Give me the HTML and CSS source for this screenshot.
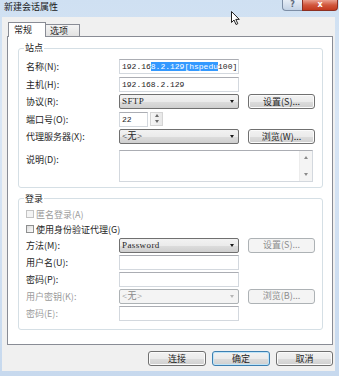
FILE: index.html
```html
<!DOCTYPE html>
<html lang="zh-CN">
<head>
    <meta charset="UTF-8">
    <title>新建会话属性</title>
    <link rel="stylesheet" href="styles.css">
</head>
<body>
    <div class="window">
        <div class="titlebar">
            <span class="title">新建会话属性</span>
            <div class="caption-buttons">
                <span class="cap cap-help">?</span>
                <span class="cap cap-close">x</span>
            </div>
        </div>

        <div class="body">
            <div class="tabs">
                <span class="tab active">常规</span>
                <span class="tab">选项</span>
            </div>

            <div class="panel">
                <fieldset class="group site">
                    <legend>站点</legend>

                    <span class="label">名称(N):</span>
                    <div class="text">192.16<span class="sel">8.2.129[hspedu</span>100]</div>
                    <span></span>

                    <span class="label">主机(H):</span>
                    <div class="text">192.168.2.129</div>
                    <span></span>

                    <span class="label">协议(R):</span>
                    <div class="combo">SFTP<i class="arrow"></i></div>
                    <button class="btn">设置(S)...</button>

                    <span class="label">端口号(O):</span>
                    <div class="port">
                        <div class="text">22</div>
                        <div class="spin"><i class="up"></i><i class="down"></i></div>
                    </div>
                    <span></span>

                    <span class="label">代理服务器(X):</span>
                    <div class="combo">&lt;无&gt;<i class="arrow"></i></div>
                    <button class="btn">浏览(W)...</button>

                    <span class="label top">说明(D):</span>
                    <div class="memo">
                        <div class="scroll"><i class="up"></i><i class="down"></i></div>
                    </div>
                </fieldset>

                <fieldset class="group login">
                    <legend>登录</legend>

                    <label class="check disabled"><i class="box"></i>匿名登录(A)</label>
                    <label class="check"><i class="box"></i>使用身份验证代理(G)</label>

                    <span class="label">方法(M):</span>
                    <div class="combo">Password<i class="arrow"></i></div>
                    <button class="btn" disabled>设置(S)...</button>

                    <span class="label">用户名(U):</span>
                    <div class="text"></div>
                    <span></span>

                    <span class="label">密码(P):</span>
                    <div class="text"></div>
                    <span></span>

                    <span class="label disabled">用户密钥(K):</span>
                    <div class="combo off">&lt;无&gt;<i class="arrow"></i></div>
                    <button class="btn" disabled>浏览(B)...</button>

                    <span class="label disabled">密码(E):</span>
                    <div class="text"></div>
                    <span></span>
                </fieldset>
            </div>

            <div class="actions">
                <button class="btn">连接</button>
                <button class="btn default">确定</button>
                <button class="btn">取消</button>
            </div>
        </div>

        <svg class="cursor" width="10" height="15" viewBox="0 0 10 15">
            <path d="M0.5 0.5 L0.5 11.5 L3 9 L5 13.5 L6.8 12.7 L4.8 8.4 L8.3 8.4 Z" fill="#fff" stroke="#222" stroke-width="1"/>
        </svg>
    </div>
</body>
</html>
```

FILE: styles.css
```css
* {
    box-sizing: border-box;
}
body {
    margin: 0;
    font-family: "Noto Sans CJK SC", "Noto Sans", sans-serif;
    font-size: 9px;
    color: #1e1e1e;
}
.window {
    position: relative;
    width: 339px;
    height: 376px;
    display: flex;
    flex-direction: column;
    overflow: hidden;
    background: linear-gradient(180deg, #cfe0f2 0%, #d9e6f5 30%, #c7d9ee 100%);
}
.titlebar {
    height: 17px;
    display: flex;
    align-items: flex-start;
    padding-left: 4px;
}
.title {
    line-height: 14px;
    color: #1a1a1a;
}
.caption-buttons {
    margin-left: auto;
    margin-right: 1px;
    display: flex;
}
.cap {
    height: 11px;
    line-height: 9px;
    text-align: center;
    font-family: "DejaVu Sans", sans-serif;
    font-size: 8px;
    font-weight: bold;
    border: 1px solid #7d8ea6;
    border-top: none;
}
.cap-help {
    width: 20px;
    color: #5d6a7c;
    border-radius: 0 0 0 4px;
    border-right: none;
    background: linear-gradient(#e6edf6, #c3d2e5);
}
.cap-close {
    width: 36px;
    color: #fff;
    border-color: #8c2f22;
    border-radius: 0 0 4px 0;
    background: linear-gradient(#eaa08f, #d1573d 50%, #c2391e 100%);
}
.body {
    flex: 1;
    margin: 0 4px 5px 2px;
    padding: 5px 2px 5px 5px;
    background: #f0f0f0;
    display: flex;
    flex-direction: column;
}
.tabs {
    height: 14px;
    display: flex;
    align-items: flex-end;
    padding-left: 1px;
    position: relative;
    z-index: 1;
}
.tab {
    width: 34px;
    height: 12px;
    line-height: 11px;
    padding-left: 4px;
    border: 1px solid #898c95;
    border-left: none;
    border-bottom: none;
    background: linear-gradient(#f4f4f4, #e2e2e2);
}
.tab.active {
    width: 38px;
    height: 15px;
    line-height: 13px;
    padding-left: 5px;
    margin-bottom: -1px;
    border-left: 1px solid #898c95;
    background: #fff;
}
.panel {
    width: 326px;
    height: 309px;
    border: 1px solid #898c95;
    background: #fff;
    padding: 5px 0 0 10px;
}
.group {
    width: 305px;
    margin: 0;
    min-inline-size: 0;
    border: 1px solid #d5dfe5;
    border-radius: 3px;
    display: grid;
    grid-template-columns: 93px 120px 76px;
    align-items: center;
}
.group legend {
    line-height: 12px;
    padding: 0 1px;
    margin-left: -2px;
}
.site {
    padding: 5px 7px 5px 7px;
    grid-template-rows: repeat(5, 15px) 35px;
    row-gap: 2.5px;
}
.login {
    margin-top: 5px;
    padding: 3px 7px 8px 7px;
    grid-template-rows: 13px 13px repeat(5, 15px);
    row-gap: 2px;
}
.label.top {
    align-self: start;
    padding-top: 6px;
}
.disabled {
    color: #9b9b9b;
}
.text {
    height: 15px;
    line-height: 13px;
    padding-left: 2px;
    border: 1px solid #d3d8de;
    border-top-color: #abadb3;
    background: #fff;
    font-family: "Liberation Mono", monospace;
    font-size: 8px;
    white-space: nowrap;
    overflow: hidden;
}
.sel {
    background: #3399ff;
    color: #fff;
}
.combo {
    position: relative;
    height: 15px;
    line-height: 13px;
    padding-left: 2px;
    border: 1px solid #707070;
    border-radius: 2px;
    background: linear-gradient(#f2f2f2 0%, #ebebeb 50%, #dddddd 51%, #cfcfcf 100%);
    font-family: "Liberation Serif", "Noto Sans CJK SC", serif;
    font-size: 9px;
    letter-spacing: 0.4px;
}
.combo.off {
    border-color: #adb2b5;
    background: #f4f4f4;
    color: #8a8a8a;
}
.arrow {
    position: absolute;
    right: 4px;
    top: 5px;
    border-left: 2.5px solid transparent;
    border-right: 2.5px solid transparent;
    border-top: 3px solid #1a1a1a;
}
.combo.off .arrow {
    border-top-color: #b5b5b5;
}
.btn {
    height: 15px;
    padding: 0;
    border: 1px solid #707070;
    border-radius: 3px;
    background: linear-gradient(#f2f2f2 0%, #ebebeb 50%, #dddddd 51%, #cfcfcf 100%);
    box-shadow: inset 0 0 0 1px #fbfbfb;
    font-family: inherit;
    font-size: 9px;
    line-height: 12px;
    color: #1e1e1e;
}
.group .btn {
    width: 67px;
    justify-self: end;
}
.btn:disabled {
    border-color: #adb2b5;
    background: #f4f4f4;
    box-shadow: none;
    color: #8d8d8d;
}
.port {
    display: flex;
    gap: 2px;
}
.port .text {
    width: 29px;
}
.spin {
    width: 13px;
    height: 14px;
    border: 1px solid #d5d5d5;
    background: linear-gradient(90deg, #f6f6f6, #e8e8e8);
    display: flex;
    flex-direction: column;
    justify-content: space-around;
    align-items: center;
}
.up, .down {
    width: 0;
    height: 0;
    border-left: 2.5px solid transparent;
    border-right: 2.5px solid transparent;
}
.up {
    border-bottom: 3px solid #6a6a6a;
}
.down {
    border-top: 3px solid #6a6a6a;
}
.memo {
    grid-column: 2 / 4;
    align-self: end;
    width: 194px;
    height: 32px;
    border: 1px solid #d3d8de;
    border-top-color: #abadb3;
    background: #fff;
    display: flex;
    justify-content: flex-end;
}
.scroll {
    width: 13px;
    height: 100%;
    background: #f4f4f4;
    border-left: 1px solid #ececec;
    display: flex;
    flex-direction: column;
    justify-content: space-between;
    align-items: center;
    padding: 5px 0 5px;
}
.scroll .up {
    border-bottom-color: #8a8a8a;
}
.scroll .down {
    border-top-color: #8a8a8a;
}
.check {
    grid-column: 1 / -1;
    display: flex;
    align-items: center;
    gap: 2px;
}
.box {
    width: 8px;
    height: 8px;
    border: 1px solid #8e8f8f;
    background: linear-gradient(135deg, #dcdcdc, #fdfdfd);
}
.check.disabled .box {
    border-color: #c3c3c3;
    background: #f4f4f4;
}
.actions {
    margin-top: 6px;
    display: flex;
    justify-content: flex-end;
    gap: 6px;
}
.actions .btn {
    width: 58px;
}
.actions .btn:last-child {
    width: 57px;
}
.btn.default {
    border-color: #3c7fb1;
    box-shadow: inset 0 0 0 1px #bfe4f8;
}
.cursor {
    position: absolute;
    left: 231px;
    top: 11px;
}
```
